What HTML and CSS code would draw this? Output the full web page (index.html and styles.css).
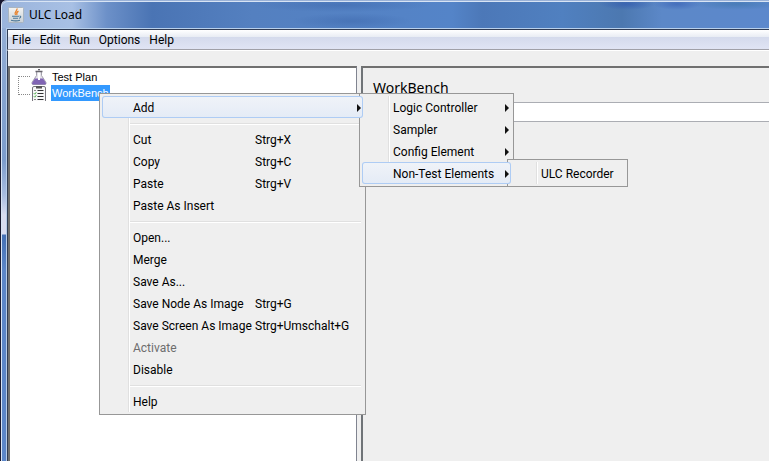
FILE: index.html
```html
<!DOCTYPE html>
<html lang="en">
<head>
<meta charset="utf-8">
<title>ULC Load</title>
<link rel="stylesheet" href="styles.css">
</head>
<body>
<div class="window">
  <header class="titlebar">
    <svg class="app-icon" viewBox="0 0 16 16" aria-hidden="true">
      <defs><linearGradient id="tile" x2="0" y2="1"><stop offset="0" stop-color="#f4f4f2"/><stop offset="1" stop-color="#c9d0d6"/></linearGradient></defs>
      <rect x=".5" y=".5" width="15" height="15" rx="1" fill="url(#tile)" stroke="#a9b5c1"/>
      <path d="M9 1.500C9.500 4 5.500 4.800 7.500 8M10.500 4.200C8 5.500 8.500 6.500 9 8" fill="none" stroke="#e8822c" stroke-width="1.300"/>
      <path d="M4 9.200h7M5 11.200h5M3 13.300q5 1.200 9 0M11.500 9q2 0 .8 1.600L11 11.400" fill="none" stroke="#4c7898" stroke-width="1.100"/>
    </svg>
    <h1 class="title">ULC Load</h1>
  </header>
  <div class="client">
    <nav class="menubar">
      <button>File</button><button>Edit</button><button>Run</button><button>Options</button><button>Help</button>
    </nav>
    <div class="toolbar"></div>
    <main class="split">
      <section class="tree-pane">
        <ul class="tree">
          <li><svg class="node-icon" viewBox="0 0 16 16" aria-hidden="true">
            <path d="M5.500 2.500v4L1 13.500q-.3 2 1 2h12q1.300 0 1-2L10.500 6.500v-4z" fill="#e6e4ea" stroke="#a4a2ac"/>
            <path d="M4 9.500h8l3 4.500q0 1.500-1 1.500H2q-1 0-1-1.500z" fill="#8064b4"/>
            <path d="M8 3v8" stroke="#fff" stroke-width="2"/>
            <path d="M4.500 2.500h7M7 .5h2" stroke="#66646c" stroke-width="1.400"/>
          </svg><span>Test Plan</span></li>
          <li class="selected"><svg class="node-icon" viewBox="0 0 16 16" aria-hidden="true">
            <path d="M1.500 16V3q0-1.500 1.500-1.500h10q1.500 0 1.500 1.500v13" fill="#f8f8f8" stroke="#77757c"/>
            <path d="M5 1h6v2.500H5z" fill="#555"/>
            <path d="M6.500 5.500h6M6.500 8.500h6M6.500 11.500h6M6.500 14.500h6" stroke="#333"/>
            <path d="M2.800 8.200l1 1 1.500-2M2.800 11.200l1 1 1.500-2" fill="none" stroke="#4fae4a"/>
            <path d="M3 5.500h2M3 14.500h2" stroke="#888"/>
          </svg><span>WorkBench</span></li>
        </ul>
      </section>
      <section class="detail-pane">
        <h2 class="heading">WorkBench</h2>
        <input class="name-field" type="text" aria-label="Name">
      </section>
    </main>
  </div>
</div>

<div class="menu context-menu" role="menu">
  <button class="item active"><span>Add</span><i class="arrow"></i></button>
  <hr>
  <button class="item"><span>Cut</span><kbd>Strg+X</kbd></button>
  <button class="item"><span>Copy</span><kbd>Strg+C</kbd></button>
  <button class="item"><span>Paste</span><kbd>Strg+V</kbd></button>
  <button class="item"><span>Paste As Insert</span></button>
  <hr>
  <button class="item"><span>Open...</span></button>
  <button class="item"><span>Merge</span></button>
  <button class="item"><span>Save As...</span></button>
  <button class="item"><span>Save Node As Image</span><kbd>Strg+G</kbd></button>
  <button class="item"><span>Save Screen As Image</span><kbd>Strg+Umschalt+G</kbd></button>
  <button class="item" disabled><span>Activate</span></button>
  <button class="item"><span>Disable</span></button>
  <hr>
  <button class="item"><span>Help</span></button>
</div>
<div class="menu add-menu" role="menu">
  <button class="item"><span>Logic Controller</span><i class="arrow"></i></button>
  <button class="item"><span>Sampler</span><i class="arrow"></i></button>
  <button class="item"><span>Config Element</span><i class="arrow"></i></button>
  <button class="item active"><span>Non-Test Elements</span><i class="arrow"></i></button>
</div>
<div class="menu element-menu" role="menu">
  <button class="item"><span>ULC Recorder</span></button>
</div>
</body>
</html>
```
FILE: styles.css
```css
* { box-sizing: border-box; }
body {
  margin: 0;
  height: 100vh;
  overflow: hidden;
  background: #181830;
  font: 12px/16px "Noto Sans", "Open Sans", sans-serif;
  color: #000;
}
button {
  margin: 0;
  padding: 0;
  border: 0;
  background: none;
  font: inherit;
  color: inherit;
  text-align: left;
}
.window {
  display: flex;
  flex-direction: column;
  height: 100%;
  margin-left: 1px;
  padding-top: 1px;
  padding-left: 4px;
  border-left: 1px solid #d8e4f4;
  border-top-left-radius: 6px;
  background: linear-gradient(#9ab2d8 0, #86a4d0 90px, #7c9ccc 160px, #a8bce0 195px, #d8dcf0 215px, #d8dcf0 234px, #4470b4 235px, #5c86c8 270px, #5c86c8);
}
.titlebar {
  display: flex;
  align-items: center;
  gap: 5px;
  height: 27px;
  margin-left: -4px;
  padding: 0 0 0 6px;
  border-top: 1px solid #d8e4f4;
  border-top-left-radius: 6px;
  background:
    radial-gradient(ellipse 60px 8px at 350px 19px, rgba(50, 90, 160, 0.35), transparent),
    radial-gradient(ellipse 90px 7px at 340px 3px, rgba(50, 90, 160, 0.35), transparent),
    radial-gradient(ellipse 28px 6px at 625px 2px, rgba(45, 85, 175, 0.6), transparent),
    radial-gradient(ellipse 24px 6px at 675px 2px, rgba(45, 85, 175, 0.5), transparent),
    radial-gradient(ellipse 45px 6px at 735px 2px, rgba(50, 110, 160, 0.45), transparent),
    linear-gradient(90deg, #9ab4dc 0, #a8c0e4 70px, #6c90c8 105px, #4a74b4 150px, #5480c0 250px, #5484c8 450px, #4c78b8 480px, #5080c0 560px, #4c78b0 620px, #5c88c8 660px, #5c88cc);
}
.app-icon { width: 16px; height: 16px; }
.title { margin: 0; font: inherit; }
.client {
  display: flex;
  flex: 1;
  flex-direction: column;
  border-top: 1px solid #b8d0ec;
  border-left: 1px solid #b8cce8;
  background: #efefef;
}
.menubar {
  display: flex;
  align-items: flex-start;
  gap: 9px;
  height: 21px;
  padding: 2px 4px 0;
  border-top: 1px solid #303c54;
  border-left: 1px solid #303c54;
  border-bottom: 1px solid #a0a0a8;
  background: linear-gradient(#fff, #e8ecf4 7px, #d4daec 7px, #e0e4f4);
  font-family: Roboto, sans-serif;
}
.toolbar {
  height: 16px;
  border-top: 1px solid #fff;
  border-left: 1px solid #303c54;
}
.split {
  display: flex;
  flex: 1;
  gap: 4px;
  border-left: 1px solid #303c54;
}
.tree-pane {
  flex: 0 0 calc(46% - 1px);
  border: 2px solid #707070;
  border-right: 1px solid #808490;
  border-bottom: 0;
  background: #fff;
}
.tree {
  position: relative;
  margin: 0;
  padding: 1px 0 0 21px;
  list-style: none;
  font: 11px/16px "Liberation Sans", Arial, sans-serif;
}
.tree::before {
  content: "";
  position: absolute;
  left: 8px;
  top: 8px;
  width: 11px;
  height: 17px;
  border: 1px dotted #888;
  border-right: 0;
}
.tree li { display: flex; gap: 4px; height: 16px; }
.tree span { padding: 0 1px; }
.selected span { background: #3399ff; color: #fff; }
.node-icon { width: 16px; height: 16px; }
.detail-pane {
  flex: 1;
  border-top: 2px solid #707070;
  border-left: 2px solid #707478;
}
.heading {
  margin: 10px 10px 4px;
  font: 14px/20px "Noto Sans", "Open Sans", sans-serif;
}
.name-field {
  display: block;
  width: 100%;
  height: 20px;
  border: 1px solid #abadb3;
  border-width: 1px 0;
  background: #fff;
  font: inherit;
}
.menu {
  position: absolute;
  padding: 2px;
  border: 1px solid #979797;
  background: linear-gradient(90deg, transparent 28px, #e0e0e0 28px, #e0e0e0 29px, #fff 29px, #fff 30px, transparent 30px) 0 2px / 100% calc(100% - 4px) no-repeat #efefef;
  font-family: Roboto, sans-serif;
}
.context-menu { left: 99px; top: 93px; width: 267px; }
.add-menu { left: 359px; top: 93px; width: 155px; }
.element-menu { left: 507px; top: 159px; width: 121px; }
.item {
  display: flex;
  align-items: center;
  width: 100%;
  height: 22px;
  padding: 1px 0 0 31px;
  border-radius: 3px;
}
.item span { white-space: nowrap; }
.context-menu .item span { flex: 0 0 122px; }
.item kbd { font: inherit; white-space: nowrap; }
.item:disabled { color: #6d6d6d; }
/* The open branch stays visible above the edge of its submenu. */
.active {
  position: relative;
  z-index: 1;
  box-shadow: inset 0 0 0 1px #aeccf4;
  background: linear-gradient(#f0f3f8, #e4ebf6);
}
.arrow {
  margin-left: auto;
  margin-right: 2px;
  border: 4px solid transparent;
  border-left-color: #111;
  border-right: 0;
}
.menu hr {
  height: 2px;
  margin: 5px 2px 3px 28px;
  border: 0;
  border-top: 1px solid #e0e0e0;
  border-bottom: 1px solid #fff;
}
```
